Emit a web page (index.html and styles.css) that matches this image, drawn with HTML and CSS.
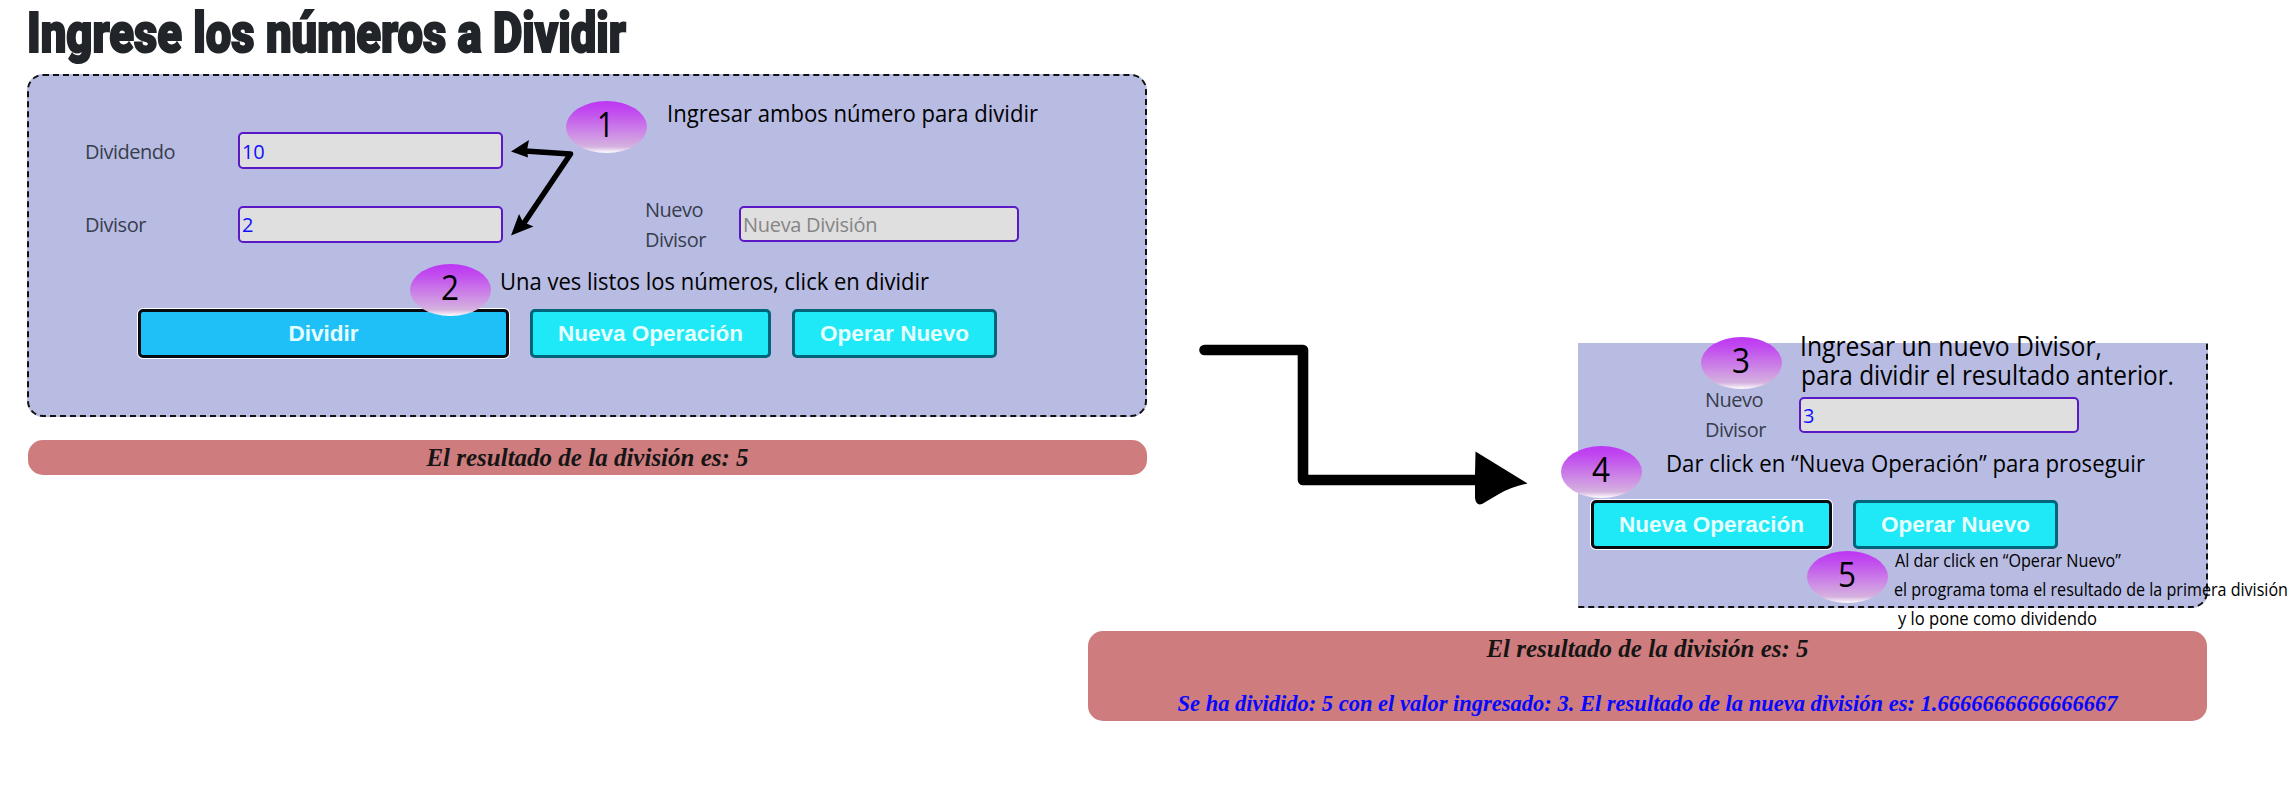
FILE: index.html
```html
<!DOCTYPE html>
<html lang="es">
<head>
<meta charset="utf-8">
<title>Ingrese los números a Dividir</title>
<link rel="stylesheet" href="styles.css">
</head>
<body>
<main class="board">
  <section class="first">
    <svg class="title" width="640" height="74" role="heading"><text x="0" y="52" textLength="599" lengthAdjust="spacingAndGlyphs">Ingrese los números a Dividir</text></svg>
    <form class="panel">
      <div class="row row-one">
        <label class="label">Dividendo</label>
        <input class="field" value="10">
      </div>
      <div class="row row-two">
        <label class="label">Divisor</label>
        <input class="field" value="2">
        <label class="label label-new">Nuevo<br>Divisor</label>
        <input class="field field-new" placeholder="Nueva División">
      </div>
      <div class="actions">
        <button type="button" class="btn btn-main focused">Dividir</button>
        <button type="button" class="btn btn-again">Nueva Operación</button>
        <button type="button" class="btn btn-new">Operar Nuevo</button>
      </div>
    </form>
    <div class="result"><p class="line">El resultado de la división es: 5</p></div>
  </section>
  <section class="second">
    <form class="panel panel-cut">
      <div class="row">
        <label class="label label-cut">Nuevo<br>Divisor</label>
        <input class="field field-new" value="3">
      </div>
      <div class="actions actions-cut">
        <button type="button" class="btn btn-again focused">Nueva Operación</button>
        <button type="button" class="btn btn-new">Operar Nuevo</button>
      </div>
    </form>
    <div class="result result-tall">
      <p class="line">El resultado de la división es: 5</p>
      <p class="line line-new">Se ha dividido: 5 con el valor ingresado: 3. El resultado de la nueva división es: 1.6666666666666667</p>
    </div>
  </section>
  <svg class="notes" width="2294" height="797" viewBox="0 0 2294 797">
    <defs>
      <linearGradient id="ball" x1="0" y1="0" x2="0" y2="1">
        <stop offset="0" stop-color="#bd36f3"/>
        <stop offset=".2" stop-color="#c14bef"/>
        <stop offset=".88" stop-color="#d5b2df"/>
        <stop offset="1" stop-color="#fff"/>
      </linearGradient>
    </defs>
    <path class="stroke" d="M525 151L570.500 154L522 226"/>
    <path d="M511 151.500L529 140L527 150L528 157.500ZM511 235.500L519 214L523 222L533.500 226.500Z"/>
    <path class="thick" d="M1204.500 350H1303V480H1478"/>
    <path d="M1475.500 451.500L1527.500 483.500Q1511 487 1499 494L1482 504Q1476 506 1475 498V474Z"/>
    <g fill="url(#ball)">
      <ellipse cx="606.500" cy="127" rx="40.500" ry="26"/>
      <ellipse cx="450.500" cy="290" rx="40.500" ry="26"/>
      <ellipse cx="1741.500" cy="363" rx="40.500" ry="26"/>
      <ellipse cx="1601.500" cy="472" rx="40.500" ry="26"/>
      <ellipse cx="1847.500" cy="577" rx="40.500" ry="26"/>
    </g>
    <g class="num">
      <text x="597" y="137" textLength="17" lengthAdjust="spacingAndGlyphs">1</text>
      <text x="441" y="300" textLength="18" lengthAdjust="spacingAndGlyphs">2</text>
      <text x="1732" y="373" textLength="18" lengthAdjust="spacingAndGlyphs">3</text>
      <text x="1592" y="482" textLength="18" lengthAdjust="spacingAndGlyphs">4</text>
      <text x="1838" y="587" textLength="18" lengthAdjust="spacingAndGlyphs">5</text>
    </g>
    <g class="note">
      <text x="667" y="122" textLength="371" lengthAdjust="spacingAndGlyphs">Ingresar ambos número para dividir</text>
      <text x="500" y="290" textLength="429" lengthAdjust="spacingAndGlyphs">Una ves listos los números, click en dividir</text>
      <text x="1666" y="472" textLength="479" lengthAdjust="spacingAndGlyphs">Dar click en “Nueva Operación” para proseguir</text>
    </g>
    <g class="note note-large">
      <text x="1800" y="356" textLength="302" lengthAdjust="spacingAndGlyphs">Ingresar un nuevo Divisor,</text>
      <text x="1801" y="385" textLength="373" lengthAdjust="spacingAndGlyphs">para dividir el resultado anterior.</text>
    </g>
    <g class="note note-small">
      <text x="1895" y="567" textLength="226" lengthAdjust="spacingAndGlyphs">Al dar click en “Operar Nuevo”</text>
      <text x="1894" y="596" textLength="394" lengthAdjust="spacingAndGlyphs">el programa toma el resultado de la primera división</text>
      <text x="1898" y="625" textLength="199" lengthAdjust="spacingAndGlyphs">y lo pone como dividendo</text>
    </g>
  </svg>
</main>
</body>
</html>
```

FILE: styles.css
```css
* { box-sizing: border-box; }
body { margin: 0; background: #fff; }
.board { position: relative; display: flex; width: 2294px; height: 797px; padding-left: 27px; overflow: hidden; }
.first { width: 1120px; }
.title { display: block; overflow: visible; }
.title text { font: 900 55px Roboto, sans-serif; fill: #212529; stroke: #212529; stroke-width: 2px; }
.panel { width: 1120px; height: 343px; padding: 56px 0 0 56px; background: #b8bce3; border: 2px dashed #111; border-radius: 16px; }
.row { display: flex; align-items: center; }
.row-one { height: 37px; }
.row-two { height: 60px; margin-top: 25px; }
.label { width: 153px; padding-top: 2px; font: 20px/30px "Open Sans", sans-serif; letter-spacing: -0.5px; color: #383d4d; }
.label-new { width: 94px; margin-left: 142px; padding-top: 1px; }
.field { width: 265px; height: 37px; padding: 1px 2px 0; border: 2px solid #5b18c5; border-radius: 5px; background: #dfdfdf; color: #1010ff; font: 20px "Open Sans", sans-serif; letter-spacing: -0.3px; }
.field-new { width: 280px; height: 36px; }
.field::placeholder { color: #858585; opacity: 1; }
.actions { display: flex; gap: 21px; margin: 55px 0 0 53px; }
.btn { height: 49px; padding: 0; border: 3px solid #00647a; border-radius: 5px; background: #1fe8f7; color: #e6ffff; font: bold 22.5px "Liberation Sans", Arial, sans-serif; }
.btn-main { width: 371px; background: #1fc0f7; }
.btn-again { width: 241px; }
.btn-new { width: 205px; }
.focused { border-color: #080c12; box-shadow: 0 0 0 1px #fff; }
.result { width: 1119px; height: 35px; margin: 23px 0 0 1px; border-radius: 15px; background: #ce7c7e; text-align: center; }
.line { margin: 0; font: italic bold 25px/36px "Liberation Serif", "Times New Roman", serif; color: #151515; }
.second { width: 1120px; flex: none; margin-left: -60px; padding-top: 343px; }
.panel-cut { width: 630px; height: 265px; margin-left: 491px; padding: 42px 0 0 127px; border-top: 0; border-left: 0; border-radius: 0 0 16px 0; }
.label-cut { width: 94px; padding-top: 0; }
.actions-cut { margin: 55px 0 0 -114px; }
.result-tall { height: 90px; }
.line-new { margin-top: 19px; font-size: 22.5px; color: #0808ff; }
.notes { position: absolute; left: 0; top: 0; }
.stroke { fill: none; stroke: #000; stroke-width: 5.5px; stroke-linejoin: round; }
.thick { fill: none; stroke: #000; stroke-width: 10.6px; stroke-linecap: round; stroke-linejoin: round; }
.num { font: 35px "Open Sans", sans-serif; }
.note { font: 24.5px "Open Sans", sans-serif; }
.note-large { font-size: 27px; }
.note-small { font-size: 18px; }
```
